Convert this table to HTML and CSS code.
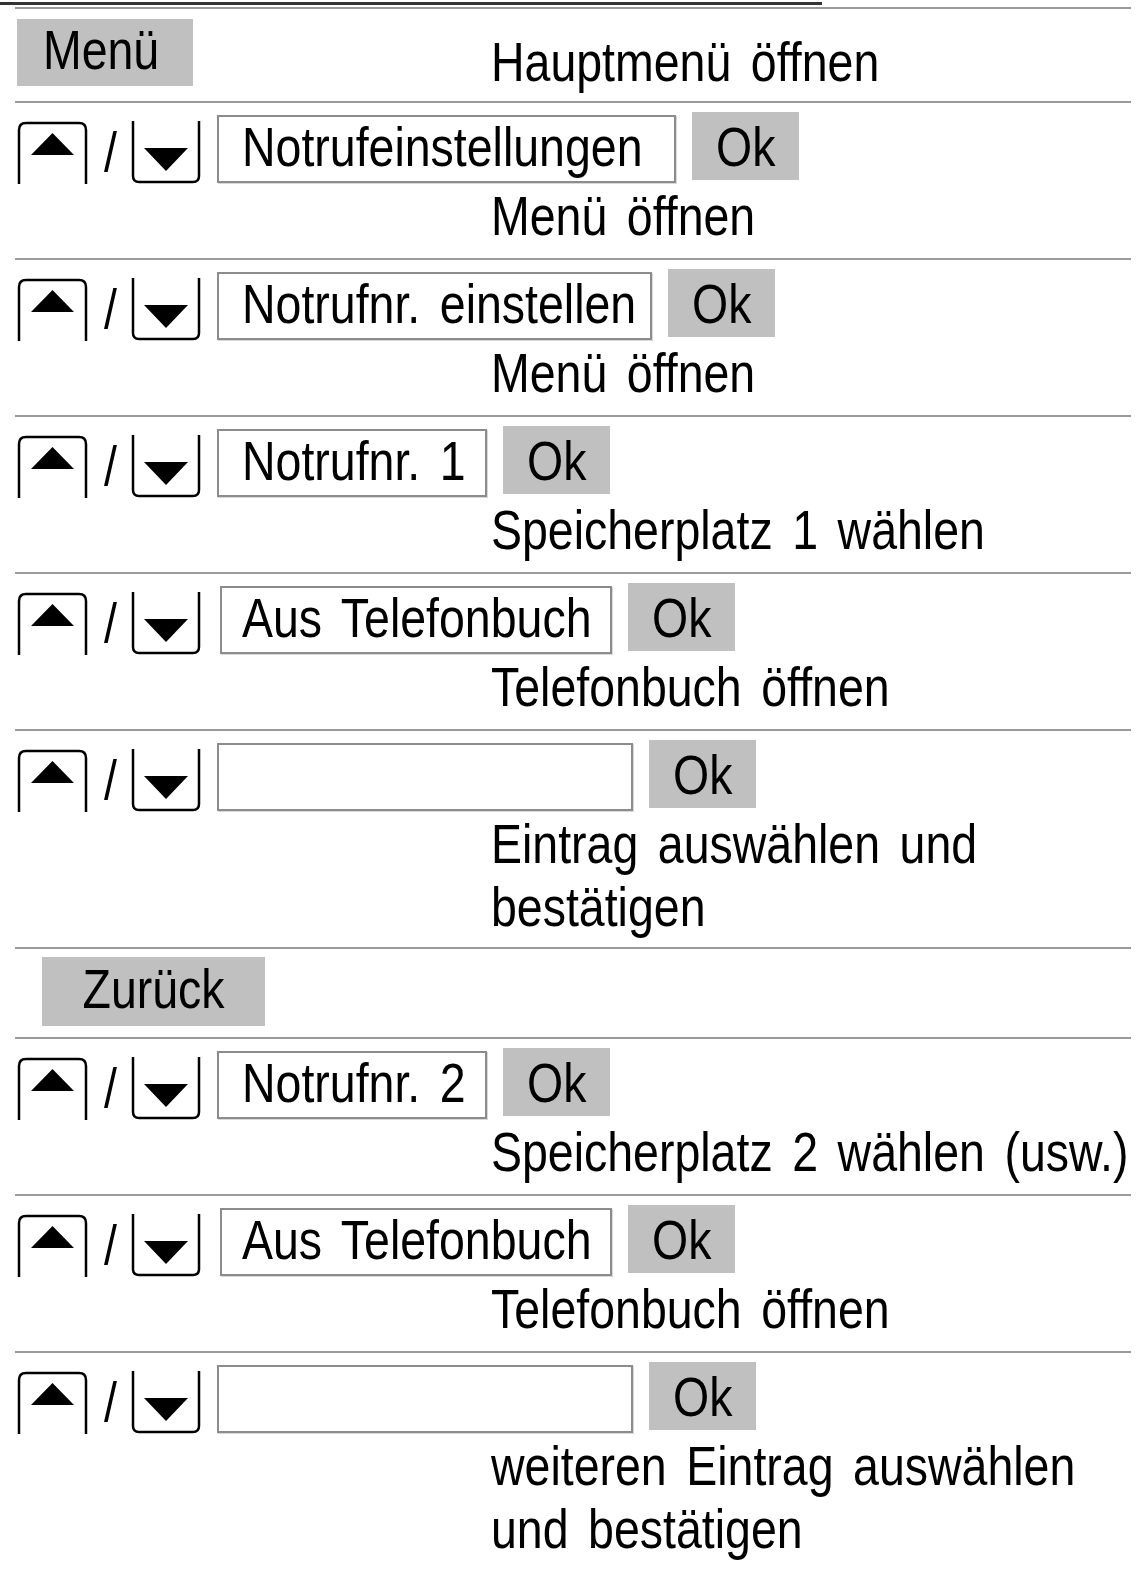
FILE: index.html
```html
<!DOCTYPE html>
<html lang="de">
<head>
<meta charset="utf-8">
<title>Notrufnummern einstellen</title>
<link rel="stylesheet" href="styles.css">
</head>
<body>
<div class="topline"></div>
<div class="steps">
  <div class="row row-head">
    <span class="btn btn-menu"><span class="t">Menü</span></span>
    <span class="desc desc-inline">Hauptmenü öffnen</span>
  </div>

  <div class="row">
    <div class="controls">
      <svg class="key key-up" width="72" height="63" viewBox="0 0 72 63"><path d="M2 63V9Q2 2 9 2H62Q69 2 69 9V63" fill="none" stroke="#000" stroke-width="2.5"/><path d="M14 34L35.5 12L57 34Z"/></svg>
      <span class="slash">/</span>
      <svg class="key key-down" width="71" height="63" viewBox="0 0 71 63"><path d="M2 0V55Q2 61 8 61H62Q68 61 68 55V0" fill="none" stroke="#000" stroke-width="2.5"/><path d="M13 27H57L35 50Z"/></svg>
      <span class="display w-einst"><span class="t">Notrufeinstellungen</span></span>
      <span class="btn btn-ok"><span class="t">Ok</span></span>
    </div>
    <div class="desc">Menü öffnen</div>
  </div>

  <div class="row">
    <div class="controls">
      <svg class="key key-up" width="72" height="63" viewBox="0 0 72 63"><path d="M2 63V9Q2 2 9 2H62Q69 2 69 9V63" fill="none" stroke="#000" stroke-width="2.5"/><path d="M14 34L35.5 12L57 34Z"/></svg>
      <span class="slash">/</span>
      <svg class="key key-down" width="71" height="63" viewBox="0 0 71 63"><path d="M2 0V55Q2 61 8 61H62Q68 61 68 55V0" fill="none" stroke="#000" stroke-width="2.5"/><path d="M13 27H57L35 50Z"/></svg>
      <span class="display w-nr-einst"><span class="t">Notrufnr. einstellen</span></span>
      <span class="btn btn-ok"><span class="t">Ok</span></span>
    </div>
    <div class="desc">Menü öffnen</div>
  </div>

  <div class="row">
    <div class="controls">
      <svg class="key key-up" width="72" height="63" viewBox="0 0 72 63"><path d="M2 63V9Q2 2 9 2H62Q69 2 69 9V63" fill="none" stroke="#000" stroke-width="2.5"/><path d="M14 34L35.5 12L57 34Z"/></svg>
      <span class="slash">/</span>
      <svg class="key key-down" width="71" height="63" viewBox="0 0 71 63"><path d="M2 0V55Q2 61 8 61H62Q68 61 68 55V0" fill="none" stroke="#000" stroke-width="2.5"/><path d="M13 27H57L35 50Z"/></svg>
      <span class="display w-nr"><span class="t">Notrufnr. 1</span></span>
      <span class="btn btn-ok"><span class="t">Ok</span></span>
    </div>
    <div class="desc">Speicherplatz 1 wählen</div>
  </div>

  <div class="row">
    <div class="controls">
      <svg class="key key-up" width="72" height="63" viewBox="0 0 72 63"><path d="M2 63V9Q2 2 9 2H62Q69 2 69 9V63" fill="none" stroke="#000" stroke-width="2.5"/><path d="M14 34L35.5 12L57 34Z"/></svg>
      <span class="slash">/</span>
      <svg class="key key-down" width="71" height="63" viewBox="0 0 71 63"><path d="M2 0V55Q2 61 8 61H62Q68 61 68 55V0" fill="none" stroke="#000" stroke-width="2.5"/><path d="M13 27H57L35 50Z"/></svg>
      <span class="display w-tel"><span class="t">Aus Telefonbuch</span></span>
      <span class="btn btn-ok"><span class="t">Ok</span></span>
    </div>
    <div class="desc">Telefonbuch öffnen</div>
  </div>

  <div class="row row-two">
    <div class="controls">
      <svg class="key key-up" width="72" height="63" viewBox="0 0 72 63"><path d="M2 63V9Q2 2 9 2H62Q69 2 69 9V63" fill="none" stroke="#000" stroke-width="2.5"/><path d="M14 34L35.5 12L57 34Z"/></svg>
      <span class="slash">/</span>
      <svg class="key key-down" width="71" height="63" viewBox="0 0 71 63"><path d="M2 0V55Q2 61 8 61H62Q68 61 68 55V0" fill="none" stroke="#000" stroke-width="2.5"/><path d="M13 27H57L35 50Z"/></svg>
      <span class="display w-empty"></span>
      <span class="btn btn-ok"><span class="t">Ok</span></span>
    </div>
    <div class="desc">Eintrag auswählen und<br>bestätigen</div>
  </div>

  <div class="row row-back">
    <span class="btn btn-back"><span class="t">Zurück</span></span>
  </div>

  <div class="row">
    <div class="controls">
      <svg class="key key-up" width="72" height="63" viewBox="0 0 72 63"><path d="M2 63V9Q2 2 9 2H62Q69 2 69 9V63" fill="none" stroke="#000" stroke-width="2.5"/><path d="M14 34L35.5 12L57 34Z"/></svg>
      <span class="slash">/</span>
      <svg class="key key-down" width="71" height="63" viewBox="0 0 71 63"><path d="M2 0V55Q2 61 8 61H62Q68 61 68 55V0" fill="none" stroke="#000" stroke-width="2.5"/><path d="M13 27H57L35 50Z"/></svg>
      <span class="display w-nr"><span class="t">Notrufnr. 2</span></span>
      <span class="btn btn-ok"><span class="t">Ok</span></span>
    </div>
    <div class="desc">Speicherplatz 2 wählen (usw.)</div>
  </div>

  <div class="row">
    <div class="controls">
      <svg class="key key-up" width="72" height="63" viewBox="0 0 72 63"><path d="M2 63V9Q2 2 9 2H62Q69 2 69 9V63" fill="none" stroke="#000" stroke-width="2.5"/><path d="M14 34L35.5 12L57 34Z"/></svg>
      <span class="slash">/</span>
      <svg class="key key-down" width="71" height="63" viewBox="0 0 71 63"><path d="M2 0V55Q2 61 8 61H62Q68 61 68 55V0" fill="none" stroke="#000" stroke-width="2.5"/><path d="M13 27H57L35 50Z"/></svg>
      <span class="display w-tel"><span class="t">Aus Telefonbuch</span></span>
      <span class="btn btn-ok"><span class="t">Ok</span></span>
    </div>
    <div class="desc">Telefonbuch öffnen</div>
  </div>

  <div class="row row-last">
    <div class="controls">
      <svg class="key key-up" width="72" height="63" viewBox="0 0 72 63"><path d="M2 63V9Q2 2 9 2H62Q69 2 69 9V63" fill="none" stroke="#000" stroke-width="2.5"/><path d="M14 34L35.5 12L57 34Z"/></svg>
      <span class="slash">/</span>
      <svg class="key key-down" width="71" height="63" viewBox="0 0 71 63"><path d="M2 0V55Q2 61 8 61H62Q68 61 68 55V0" fill="none" stroke="#000" stroke-width="2.5"/><path d="M13 27H57L35 50Z"/></svg>
      <span class="display w-empty"></span>
      <span class="btn btn-ok"><span class="t">Ok</span></span>
    </div>
    <div class="desc">weiteren Eintrag auswählen<br>und bestätigen</div>
  </div>
</div>
</body>
</html>
```

FILE: styles.css
```css
html, body {
  margin: 0;
  padding: 0;
  background: #ffffff;
}

body {
  font-family: "Liberation Sans Narrow", "Arial Narrow", "Liberation Sans", Arial, sans-serif;
  font-size: 56px;
  word-spacing: 8px;
  color: #000;
  width: 1143px;
  overflow: hidden;
}

/* condensed look of the original manual typeface */
.t {
  display: inline-block;
  transform: scaleX(0.83);
  transform-origin: 0 0;
}

.topline {
  margin-top: 2px;
  width: 822px;
  height: 3px;
  background: #333;
}

.steps {
  margin-top: 2px;
  margin-left: 15px;
  width: 1116px;
  border-top: 2px solid #9a9a9a;
}

.row {
  border-bottom: 2px solid #9a9a9a;
  padding-bottom: 11px;
}

.row-two {
  padding-bottom: 9px;
}

.row-head {
  display: flex;
  align-items: flex-start;
  height: 94px;
  padding-bottom: 0;
  box-sizing: border-box;
}

.row-back {
  display: flex;
  align-items: flex-start;
  height: 90px;
  padding-bottom: 0;
  box-sizing: border-box;
}

.row-last {
  border-bottom: none;
}

.controls {
  display: flex;
  align-items: flex-start;
  height: 81px;
}

.key {
  display: block;
  flex: none;
  margin-top: 18px;
}

.key-up {
  margin-left: 2px;
}

.slash {
  display: block;
  flex: none;
  width: 13px;
  line-height: 56px;
  margin-top: 21px;
  margin-left: 15px;
  margin-right: 14px;
  transform: scaleX(0.83);
  transform-origin: 0 0;
}

.display {
  display: block;
  flex: none;
  box-sizing: border-box;
  height: 68px;
  margin-top: 12px;
  margin-left: 15px;
  padding-left: 23px;
  border: 2px solid #8c8c8c;
  background: #fff;
  line-height: 59px;
  white-space: nowrap;
  box-shadow: 1px 1px 0 #d8d8d8;
}

.w-einst { width: 459px; }
.w-nr-einst { width: 435px; }
.w-nr { width: 270px; }
.w-tel { width: 392px; margin-left: 18px; padding-left: 20px; }
.w-empty { width: 416px; }

.btn {
  display: block;
  flex: none;
  box-sizing: border-box;
  background: #c0c0c0;
  text-align: center;
  white-space: nowrap;
}

.btn .t {
  transform-origin: 50% 50%;
}

.btn-ok {
  width: 107px;
  height: 68px;
  margin-top: 9px;
  margin-left: 16px;
  line-height: 70px;
}

.btn-menu {
  width: 176px;
  height: 67px;
  margin-top: 10px;
  margin-left: 2px;
  line-height: 62px;
  padding-right: 8px;
}

.btn-back {
  width: 223px;
  height: 69px;
  margin-top: 8px;
  margin-left: 27px;
  line-height: 64px;
}

.desc {
  margin-left: 476px;
  line-height: 63px;
  white-space: nowrap;
  transform: scaleX(0.83);
  transform-origin: 0 0;
}

.desc-inline {
  display: block;
  flex: none;
  margin-top: 21px;
  margin-left: 298px;
}
```
